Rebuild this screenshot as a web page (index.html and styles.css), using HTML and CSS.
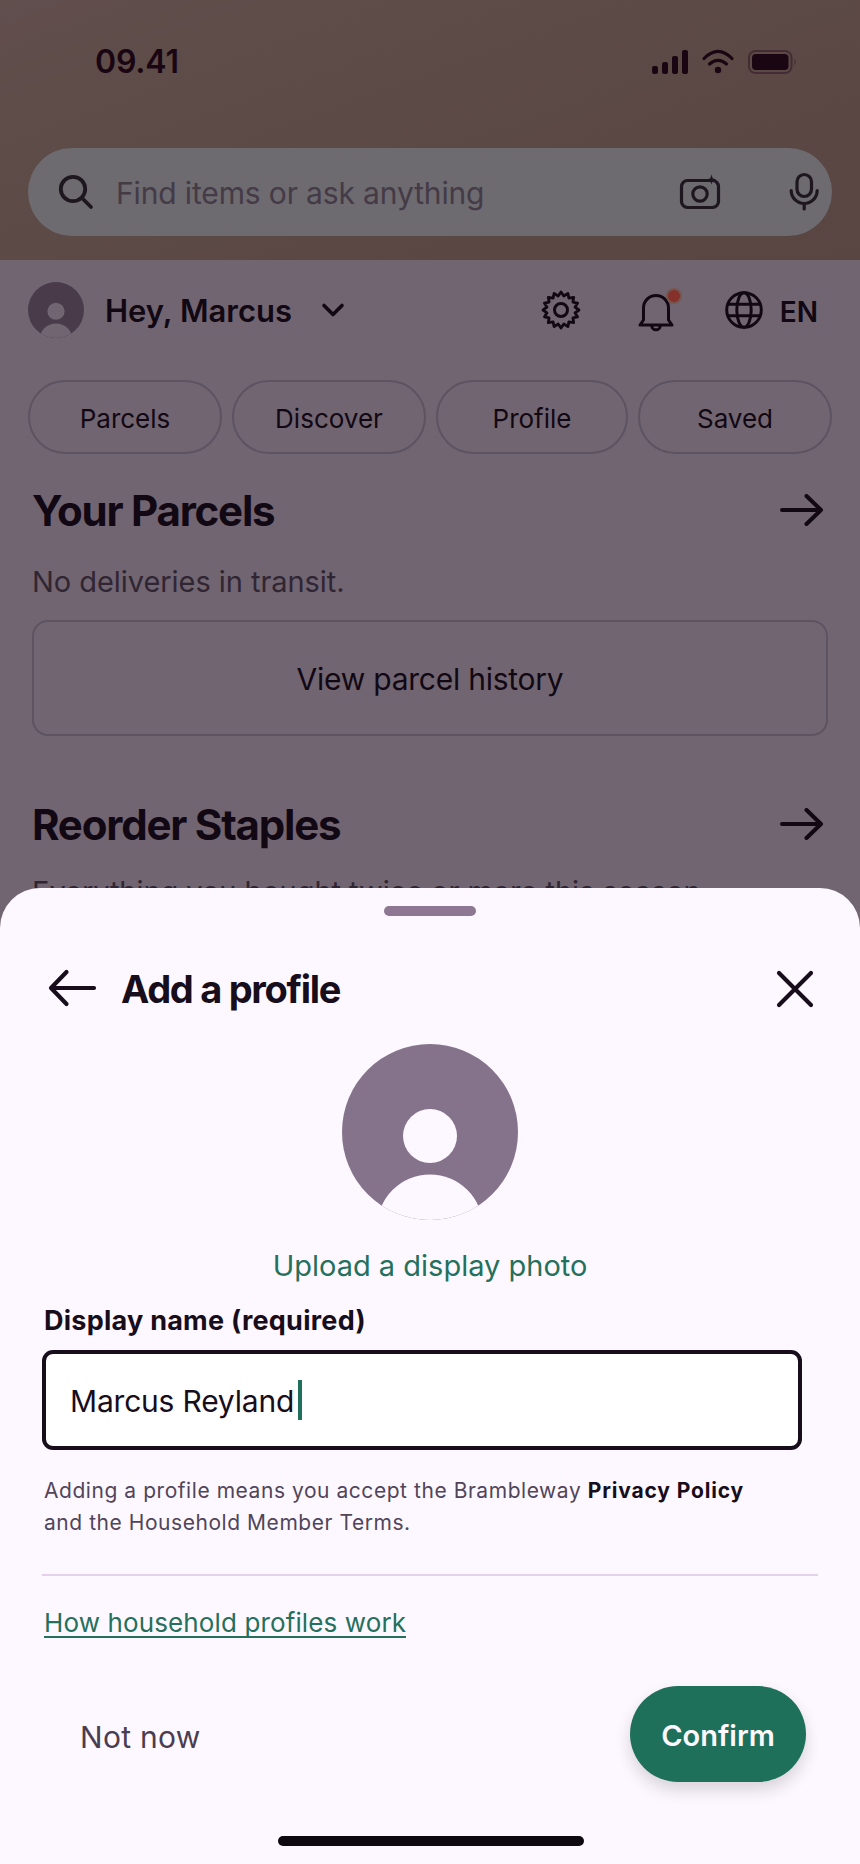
FILE: index.html
```html
<!DOCTYPE html>
<html lang="en">
<head>
<meta charset="utf-8">
<title>Add a profile</title>
<link rel="stylesheet" href="styles.css">
</head>
<body>
<div class="screen">
  <header class="top">
    <div class="status">
      <span class="clock">09.41</span>
      <svg class="signals" width="146" height="28" viewBox="0 0 146 28" fill="none">
        <g fill="#1a0613">
          <rect x="0" y="18" width="6" height="8" rx="2"/>
          <rect x="10" y="14" width="6" height="12" rx="2"/>
          <rect x="20" y="8" width="6" height="18" rx="2"/>
          <rect x="30" y="2" width="6" height="24" rx="2"/>
          <circle cx="66" cy="22" r="3.2"/>
          <rect x="100" y="6" width="36.500" height="16" rx="4"/>
        </g>
        <path d="M52 10.500Q66 -3.800 80 10.500M57.500 16Q66 8.600 74.500 16" stroke="#1a0613" stroke-width="3.200" stroke-linecap="round"/>
        <rect x="97" y="3" width="42.500" height="22" rx="6.500" stroke="#432c33" stroke-width="2"/>
        <path d="M142.500 10.500q2.500 3.500 0 7z" fill="#432c33"/>
      </svg>
    </div>
    <div class="search">
      <svg class="search-icon" width="36" height="36" viewBox="0 0 36 36" fill="none" stroke="#1f1720" stroke-width="3.800" stroke-linecap="round"><circle cx="15" cy="15" r="12.200"/><path d="M24 24L33 33"/></svg>
      <span class="placeholder">Find items or ask anything</span>
      <svg class="camera" width="42" height="38" viewBox="0 0 42 38" fill="none" stroke="#1f1720" stroke-width="3.200"><rect x="2.500" y="7.500" width="37" height="27" rx="6"/><circle cx="21" cy="21" r="7.200"/><path d="M32.500 1.500l1.200 3.800L37 6.500l-3.300 1.200-1.200 3.800-1.200-3.800L28 6.500l3.300-1.200z" fill="#1f1720" stroke="none"/></svg>
      <svg class="mic" width="32" height="40" viewBox="0 0 32 40" fill="none" stroke="#1f1720" stroke-width="3.200" stroke-linecap="round"><rect x="9" y="2.500" width="14.500" height="22" rx="7.250"/><path d="M3.200 18.500a13 13 0 0 0 26 0M16.200 33v4"/></svg>
    </div>
  </header>

  <main class="page">
    <div class="greeting">
      <svg class="avatar-small" width="56" height="56" viewBox="0 0 176 176"><clipPath id="disc"><circle cx="88" cy="88" r="88"/></clipPath><g clip-path="url(#disc)"><rect width="176" height="176" fill="#493b4a"/><circle cx="88" cy="92" r="27" fill="#706571"/><circle cx="88" cy="183.500" r="53" fill="#706571"/></g></svg>
      <span class="hello">Hey, Marcus</span>
      <svg class="chevron" width="24" height="16" viewBox="0 0 24 16" fill="none" stroke="#120814" stroke-width="3.600" stroke-linecap="round" stroke-linejoin="round"><path d="M3 3.500l9 9 9-9"/></svg>
      <svg class="gear" width="40" height="40" viewBox="0 0 40 40" fill="none" stroke="#120814" stroke-width="2.800" stroke-linejoin="round"><path d="M20 2L22.800 6L26.900 3.400L27.900 8.100L32.700 7.300L31.900 12.100L36.600 13.100L34 17.200L38 20L34 22.800L36.600 26.900L31.900 27.900L32.700 32.700L27.900 31.900L26.900 36.600L22.800 34L20 38L17.200 34L13.100 36.600L12.100 31.900L7.300 32.700L8.100 27.900L3.400 26.900L6 22.800L2 20L6 17.200L3.400 13.100L8.100 12.100L7.300 7.300L12.100 8.100L13.100 3.400L17.200 6Z"/><circle cx="20" cy="20" r="6.500" stroke-width="3"/></svg>
      <svg class="bell" width="46" height="46" viewBox="0 0 46 46" fill="none" stroke="#120814" stroke-width="3" stroke-linecap="round" stroke-linejoin="round"><path d="M7.500 33V21a12.500 12.500 0 0 1 25 0V33l3.500 5H4zM15.800 39a4.200 3.800 0 0 0 8.400 0"/><circle cx="38" cy="9" r="7" fill="#85302a" stroke="#75564d" stroke-width="2"/></svg>
      <svg class="globe" width="38" height="38" viewBox="0 0 38 38" fill="none" stroke="#120814" stroke-width="3"><circle cx="19" cy="19" r="17.300"/><ellipse cx="19" cy="19" rx="7.200" ry="17.300"/><path d="M3 13.300h32M3 24.700h32"/></svg>
      <span class="lang">EN</span>
    </div>
    <nav class="chips">
      <span class="chip">Parcels</span><span class="chip">Discover</span><span class="chip chip-narrow">Profile</span><span class="chip">Saved</span>
    </nav>
    <section class="block">
      <div class="block-head">
        <h2>Your Parcels</h2>
        <svg width="44" height="32" viewBox="0 0 44 32" fill="none" stroke="#120814" stroke-width="4" stroke-linecap="round" stroke-linejoin="round"><path d="M2 16h39M26.500 2L41 16 26.500 30"/></svg>
      </div>
      <p class="note">No deliveries in transit.</p>
      <div class="history">View parcel history</div>
    </section>
    <section class="block block-reorder">
      <div class="block-head">
        <h2>Reorder Staples</h2>
        <svg width="44" height="32" viewBox="0 0 44 32" fill="none" stroke="#120814" stroke-width="4" stroke-linecap="round" stroke-linejoin="round"><path d="M2 16h39M26.500 2L41 16 26.500 30"/></svg>
      </div>
      <p class="note note-cut">Everything you bought twice or more this season.</p>
    </section>
  </main>

  <section class="sheet">
    <div class="handle"></div>
    <div class="sheet-head">
      <svg class="back" width="50" height="40" viewBox="0 0 50 40" fill="none" stroke="#170d1b" stroke-width="4.200" stroke-linecap="round" stroke-linejoin="round"><path d="M47 19H4M19.500 3L4 19l15.500 16"/></svg>
      <h1>Add a profile</h1>
      <svg class="close" width="40" height="40" viewBox="0 0 40 40" fill="none" stroke="#170d1b" stroke-width="4.200" stroke-linecap="round"><path d="M4 4l32 32M36 4L4 36"/></svg>
    </div>
    <svg class="avatar" width="176" height="176" viewBox="0 0 176 176"><g clip-path="url(#disc)"><rect width="176" height="176" fill="#85738c"/><circle cx="88" cy="92" r="27" fill="#fdf8ff"/><circle cx="88" cy="183.500" r="53" fill="#fdf8ff"/></g></svg>
    <div class="upload">Upload a display photo</div>
    <div class="label">Display name (required)</div>
    <div class="field"><span>Marcus Reyland</span><i class="caret"></i></div>
    <p class="terms">Adding a profile means you accept the Brambleway <b>Privacy Policy</b><br>and the Household Member Terms.</p>
    <div class="rule"></div>
    <a class="help">How household profiles work</a>
    <div class="actions">
      <span class="later">Not now</span>
      <span class="confirm">Confirm</span>
    </div>
    <div class="home"></div>
  </section>
</div>
</body>
</html>
```
FILE: styles.css
```css
* { box-sizing: border-box; }
body { margin: 0; background: #706571; }
h1, h2, p { margin: 0; }
svg { display: block; flex: none; }
.screen {
  display: flex; flex-direction: column;
  width: 860px; height: 1864px; overflow: hidden;
  background: #706571; color: #120814;
  font-family: Inter, "Liberation Sans", sans-serif;
  font-size: 30px; white-space: nowrap;
}
.top { height: 260px; flex: none; padding: 43px 28px 0; background: linear-gradient(160deg, #614e4e 0%, #5d4c47 28%, #5b4845 65%, #594643 100%); }
.status { display: flex; justify-content: space-between; height: 105px; padding: 0 34px 0 67px; }
.clock { font-size: 32px; font-weight: 600; line-height: 38px; letter-spacing: -.2px; color: #1a0613; }
.signals { margin-top: 5px; }
.search { display: flex; align-items: center; height: 88px; border-radius: 44px; background: #6d6a70; padding: 0 12px 0 30px; }
.placeholder { margin: 2px 0 0 22px; letter-spacing: -.14px; color: #443b46; }
.camera { margin-left: auto; }
.mic { margin-left: 67px; }

.page { height: 628px; flex: none; overflow: hidden; }
.greeting { display: flex; align-items: center; height: 56px; margin-top: 22px; padding: 0 28px; }
.hello { margin-left: 21px; font-size: 31px; font-weight: 600; letter-spacing: 0; }
.chevron { margin-left: 29px; }
.gear { margin-left: auto; }
.bell { margin-left: 55px; }
.globe { margin-left: 43px; }
.lang { margin: 3px 14px 0 17px; font-size: 28px; font-weight: 600; }
.chips { display: flex; gap: 10px; margin-top: 42px; padding: 0 28px; }
.chip { flex: none; width: 194px; height: 74px; border: 2px solid #5e5361; border-radius: 37px; font-size: 26px; line-height: 73px; text-align: center; }
.chip-narrow { width: 192px; }
.block { padding: 0 32px; margin-top: 34px; }
.block-head { display: flex; justify-content: space-between; align-items: center; height: 48px; padding-right: 4px; }
.block-head svg { margin-top: -4px; }
h2 { margin-top: -2px; font-size: 42px; font-weight: 700; line-height: 48px; letter-spacing: -1.2px; }
.note { margin-top: 28px; font-size: 29px; line-height: 36px; letter-spacing: -.05px; color: #302633; }
.history { display: flex; align-items: center; justify-content: center; height: 116px; margin-top: 20px; padding-top: 2px; border: 2px solid #5e5361; border-radius: 16px; letter-spacing: -.25px; }
.block-reorder { margin-top: 66px; }
.note-cut { margin-top: 24px; }

.sheet { display: flex; flex-direction: column; height: 976px; flex: none; padding: 18px 42px 0; background: #fdf8ff; border-radius: 40px 40px 0 0; color: #170d1b; }
.handle { width: 92px; height: 10px; margin: 0 auto; border-radius: 5px; background: #8d7792; flex: none; }
.sheet-head { display: flex; align-items: center; height: 48px; margin-top: 49px; padding: 0 3px 0 5px; flex: none; }
h1 { margin: -1px 0 0 24px; font-size: 38px; font-weight: 700; line-height: 48px; letter-spacing: -1.3px; }
.close { margin-left: auto; }
.avatar { margin: 31px auto 0; }
.upload { margin-top: 28px; font-size: 29px; line-height: 36px; text-align: center; color: #25705c; }
.label { margin: 21px 0 0 2px; font-size: 27px; font-weight: 700; line-height: 32px; letter-spacing: .25px; }
.field { display: flex; align-items: center; width: 760px; height: 100px; flex: none; margin-top: 13px; border: 4px solid #170d1b; border-radius: 11px; background: #fff; padding: 0 24px; letter-spacing: -.2px; }
.field span { margin-top: 2px; }
.caret { width: 4px; height: 40px; margin-left: 4px; background: #1f705b; }
.terms { margin: 25px 0 0 2px; font-size: 21px; line-height: 32px; letter-spacing: .55px; color: #51455a; }
.terms b { color: #170d1b; font-weight: 700; letter-spacing: .85px; }
.rule { height: 2px; flex: none; width: 776px; margin-top: 35px; background: #e4d1ea; }
.help { align-self: flex-start; margin: 31px 0 0 2px; font-size: 26px; line-height: 31px; height: 31px; letter-spacing: .12px; color: #25705c; border-bottom: 2px solid #25705c; }
.actions { display: flex; justify-content: space-between; align-items: center; margin-top: 48px; padding: 0 12px 0 38px; }
.later { margin-top: 6px; letter-spacing: .3px; color: #4a3d4f; }
.confirm { width: 176px; height: 96px; border-radius: 48px; background: #1f705b; color: #fdf8ff; font-size: 29px; font-weight: 600; line-height: 100px; text-align: center; box-shadow: 0 8px 16px rgba(23, 13, 27, .16); }
.home { width: 306px; height: 10px; flex: none; margin: 54px 0 0 236px; border-radius: 5px; background: #0e0811; }
```
